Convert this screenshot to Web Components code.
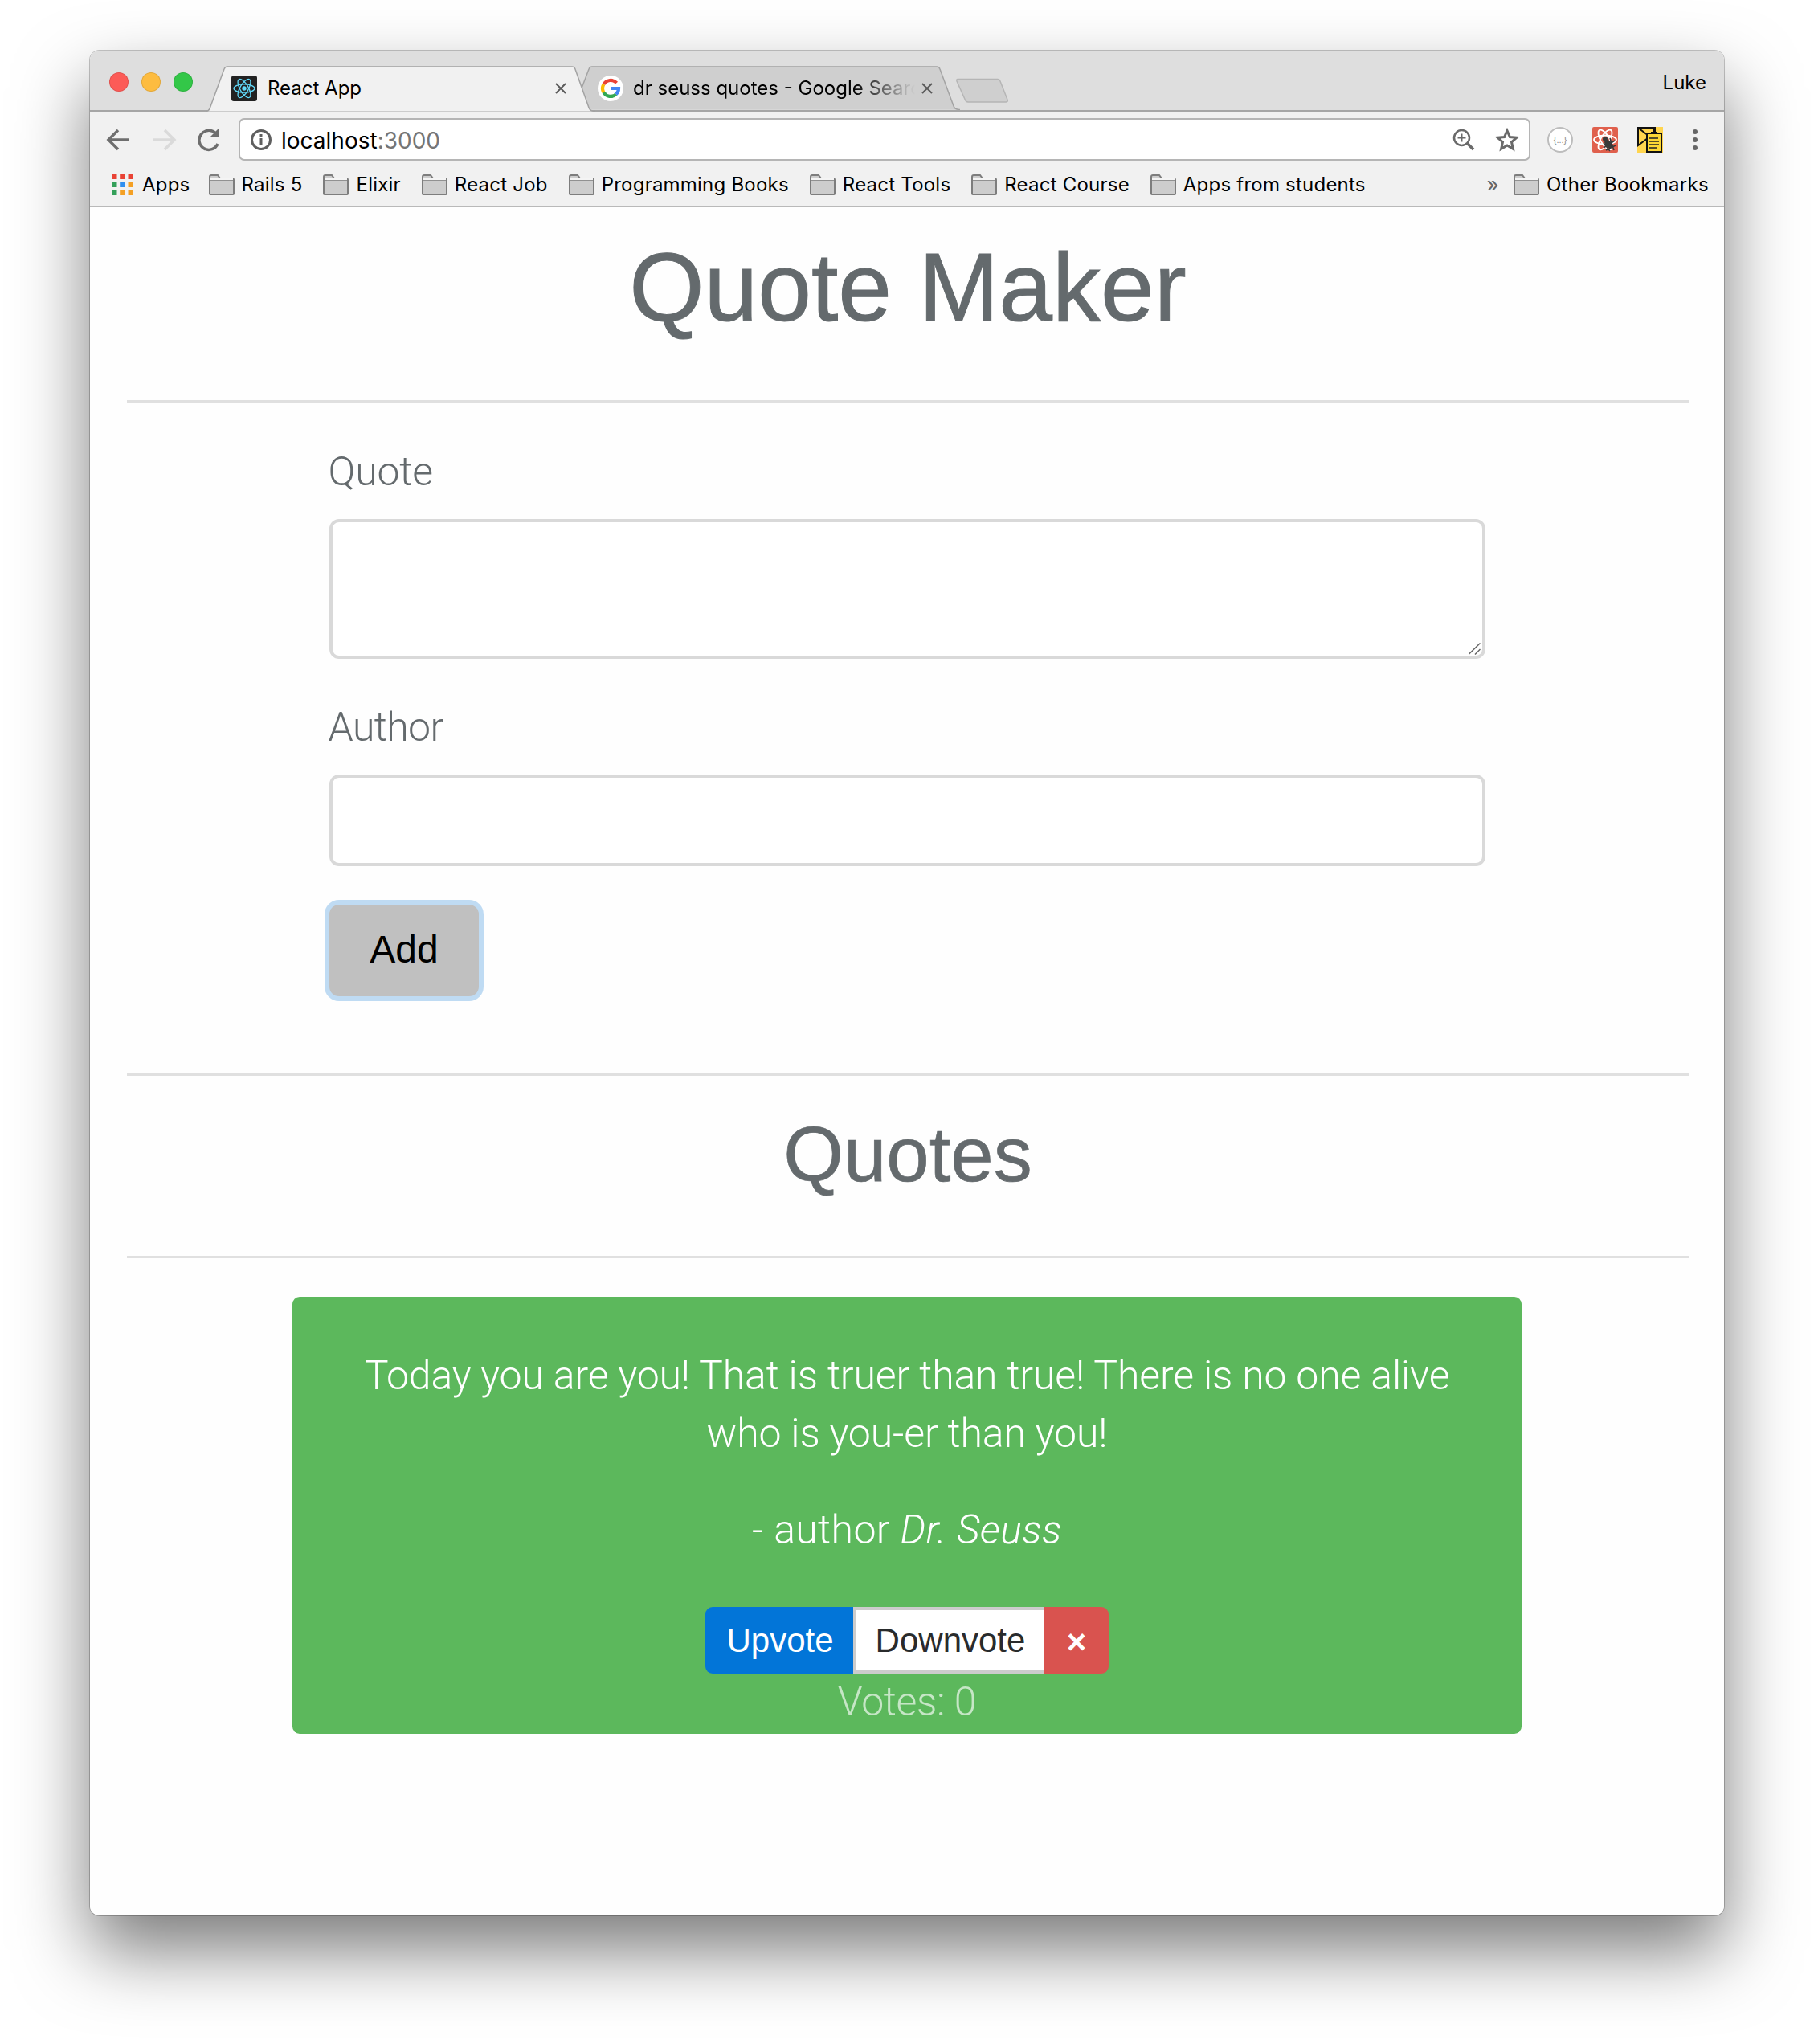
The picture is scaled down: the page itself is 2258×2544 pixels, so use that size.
<!DOCTYPE html>
<html lang="en">
<head>
<meta charset="utf-8">
<title>Quote Maker</title>
<style>
  html, body { margin: 0; background: #fff; }
  body { padding: 63px 112px 0; height: 2481px; overflow: hidden; font-family: "Liberation Sans", Arial, sans-serif; }
</style>
</head>
<body>
<browser-window>
  <tab-strip slot="strip">
    <browser-tab active title-text="React App" icon="react"></browser-tab>
    <browser-tab title-text="dr seuss quotes - Google Search" icon="google"></browser-tab>
  </tab-strip>
  <browser-toolbar slot="toolbar"></browser-toolbar>
  <bookmark-bar slot="bookmarks">
    <bookmark-item>Rails 5</bookmark-item>
    <bookmark-item>Elixir</bookmark-item>
    <bookmark-item>React Job</bookmark-item>
    <bookmark-item>Programming Books</bookmark-item>
    <bookmark-item>React Tools</bookmark-item>
    <bookmark-item>React Course</bookmark-item>
    <bookmark-item>Apps from students</bookmark-item>
    <bookmark-item slot="end">Other Bookmarks</bookmark-item>
  </bookmark-bar>
  <quote-app>
    <quote-card author="Dr. Seuss" votes="0">Today you are you! That is truer than true! There is no one alive who is you-er than you!</quote-card>
  </quote-app>
</browser-window>

<script>
const UI_FONT = '"Inter", "Liberation Sans", sans-serif';

class BrowserWindow extends HTMLElement {
  constructor() {
    super();
    this.attachShadow({ mode: "open" });
    this.shadowRoot.innerHTML = /*html*/ `
      <style>
        :host {
          display: flex;
          flex-direction: column;
          width: 2034px;
          height: 2321px;
          border-radius: 12px;
          background: #fff;
          box-shadow: 0 0 0 1px rgba(0,0,0,.22), 0 44px 90px rgba(0,0,0,.52);
          overflow: hidden;
        }
        .chrome { background: #f1f1f1; border-bottom: 2px solid #b9b9b9; }
        .page { flex: 1; background: #fefefe; }
      </style>
      <div class="chrome">
        <slot name="strip"></slot>
        <slot name="toolbar"></slot>
        <slot name="bookmarks"></slot>
      </div>
      <div class="page"><slot></slot></div>
    `;
  }
}

class TabStrip extends HTMLElement {
  constructor() {
    super();
    this.attachShadow({ mode: "open" });
    this.shadowRoot.innerHTML = /*html*/ `
      <style>
        :host {
          display: flex;
          align-items: flex-end;
          height: 74px;
          padding-left: 24px;
          background: #dedede;
          border-bottom: 2px solid #a6a6a6;
          font-family: ${UI_FONT};
        }
        .lights { display: flex; gap: 16px; align-self: flex-start; margin: 27px 16px 0 0; }
        .lights i { width: 24px; height: 24px; border-radius: 50%; box-sizing: border-box; border: 1px solid rgba(0,0,0,.1); }
        .new-tab { margin: 0 0 9px -5px; width: 65px; height: 31px; }
        .user { margin-left: auto; align-self: flex-start; margin-top: 25px; padding-right: 22px; font-size: 24px; line-height: 30px; color: #000; }
      </style>
      <div class="lights">
        <i style="background:#fc5b57"></i>
        <i style="background:#fdbc40"></i>
        <i style="background:#33c748"></i>
      </div>
      <slot></slot>
      <svg class="new-tab" viewBox="0 0 65 31">
        <path d="M2 1.500H52Q54 1.500 55 4L64 27Q65 30 62 30H15Q12.500 30 11.500 27.500L1 4Q.5 1.500 2 1.500Z" fill="#cfcfcf" stroke="#b5b5b5" stroke-width="1.500"/>
      </svg>
      <span class="user">Luke</span>
    `;
  }
}

const TAB_ICONS = {
  react: /*html*/ `
    <svg width="32" height="32" viewBox="0 0 32 32">
      <rect width="32" height="32" rx="3" fill="#222"/>
      <g fill="none" stroke="#61dafb" stroke-width="1.300">
        <ellipse cx="16" cy="16" rx="13" ry="5.200"/>
        <ellipse cx="16" cy="16" rx="13" ry="5.200" transform="rotate(60 16 16)"/>
        <ellipse cx="16" cy="16" rx="13" ry="5.200" transform="rotate(120 16 16)"/>
      </g>
      <circle cx="16" cy="16" r="2.700" fill="#61dafb"/>
    </svg>`,
  google: /*html*/ `
    <svg width="32" height="32" viewBox="0 0 32 32">
      <circle cx="16" cy="16" r="16" fill="#fff"/>
      <g fill="none" stroke-width="4.200">
        <path d="M23.500 9.200A10 10 0 0 0 7.400 11" stroke="#ea4335"/>
        <path d="M7.400 11A10 10 0 0 0 7.400 21" stroke="#fbbc05"/>
        <path d="M7.400 21A10 10 0 0 0 22.800 23.300" stroke="#34a853"/>
        <path d="M22.800 23.300A10 10 0 0 0 26 16H16" stroke="#4285f4"/>
      </g>
    </svg>`,
};

class BrowserTab extends HTMLElement {
  constructor() {
    super();
    this.attachShadow({ mode: "open" });
  }
  connectedCallback() {
    const active = this.hasAttribute("active");
    const fill = active ? "#f1f1f1" : "#cfcfcf";
    const h = active ? 57 : 55;
    this.shadowRoot.innerHTML = /*html*/ `
      <style>
        :host {
          position: relative;
          display: flex;
          align-items: center;
          box-sizing: border-box;
          width: 485px;
          height: ${h}px;
          padding: 0 0 ${active ? 2 : 0}px ${active ? 32 : 34}px;
          margin-left: ${active ? 0 : -31}px;
          margin-bottom: ${active ? -2 : 0}px;
          z-index: ${active ? 2 : 1};
          font-size: 24px;
          color: #000;
        }
        svg.shape { position: absolute; left: 0; top: 0; }
        .icon { position: relative; width: 32px; height: 32px; flex: none; }
        .label {
          position: relative;
          margin-left: ${active ? 13 : 12}px;
          width: ${active ? 361 : 351}px;
          flex: none;
          white-space: nowrap;
          overflow: hidden;
          line-height: 30px;
          ${active ? "" : "-webkit-mask-image: linear-gradient(90deg, #000 78%, transparent 100%);"}
        }
        .close { position: relative; margin-left: ${active ? -3 : 8}px; width: 14px; height: 14px; flex: none; }
      </style>
      <svg class="shape" width="485" height="${h}" viewBox="0 0 485 ${h}">
        <path d="M0 ${h - .5}Q4 ${h - .5} 5.500 ${h - 5}L23 4Q24 1 27 1H456Q459 1 460 4L477 ${h - 5}Q478.500 ${h - .5} 485 ${h - .5}" fill="${fill}" stroke="#a3a3a3" stroke-width="1.500"/>
      </svg>
      <span class="icon">${TAB_ICONS[this.getAttribute("icon")]}</span>
      <span class="label">${this.getAttribute("title-text")}</span>
      <svg class="close" viewBox="0 0 14 14"><path d="M1 1L13 13M13 1L1 13" stroke="#5a5a5a" stroke-width="2" fill="none"/></svg>
    `;
  }
}

class BrowserToolbar extends HTMLElement {
  constructor() {
    super();
    this.attachShadow({ mode: "open" });
    this.shadowRoot.innerHTML = /*html*/ `
      <style>
        :host {
          display: flex;
          align-items: center;
          height: 53px;
          padding-top: 8px;
          font-family: ${UI_FONT};
        }
        .nav { display: flex; width: 185px; flex: none; box-sizing: border-box; padding-left: 18px; gap: 20px; }
        .nav svg { width: 36px; height: 36px; display: block; }
        .omnibox {
          display: flex;
          align-items: center;
          width: 1608px;
          height: 53px;
          box-sizing: border-box;
          flex: none;
          background: #fff;
          border: 2px solid #b5b5b5;
          border-radius: 7px;
          padding: 0 12px 0 13px;
          font-size: 28px;
          color: #000;
        }
        .omnibox .url { margin-left: 12px; padding-top: 2px; flex: 1; }
        .omnibox .port { color: #757575; }
        .omnibox .right { display: flex; gap: 25px; align-items: center; }
        .exts { display: flex; align-items: center; margin-left: 21px; }
        .exts > * { flex: none; display: block; }
      </style>
      <div class="nav">
        <svg viewBox="0 0 36 36"><path d="M31 18H6M17 6L5 18L17 30" fill="none" stroke="#6e6e6e" stroke-width="3.500"/></svg>
        <svg viewBox="0 0 36 36"><path d="M5 18H30M19 6L31 18L19 30" fill="none" stroke="#dadada" stroke-width="3.500"/></svg>
        <svg viewBox="0 0 36 36"><path d="M29 23A12 12 0 1 1 26 9.500" fill="none" stroke="#6e6e6e" stroke-width="3.500"/><path d="M30 4V15H19Z" fill="#6e6e6e"/></svg>
      </div>
      <div class="omnibox">
        <svg width="26" height="26" viewBox="0 0 26 26" style="flex:none">
          <circle cx="13" cy="13" r="11.500" fill="none" stroke="#5f5f5f" stroke-width="3"/>
          <rect x="11.500" y="6" width="3" height="3" fill="#5f5f5f"/><rect x="11.500" y="11" width="3" height="9" fill="#5f5f5f"/>
        </svg>
        <span class="url">localhost<span class="port">:3000</span></span>
        <span class="right">
          <svg width="28" height="28" viewBox="0 0 28 28">
            <circle cx="11.500" cy="11.500" r="9.500" fill="none" stroke="#6a6a6a" stroke-width="2.500"/>
            <path d="M18 18L26 26" stroke="#6a6a6a" stroke-width="3.500"/>
            <path d="M11.500 6.500V16.500M6.500 11.500H16.500" stroke="#6a6a6a" stroke-width="2"/>
          </svg>
          <svg width="30" height="30" viewBox="0 0 30 30">
            <path d="M15 3.500L18.400 11.500L27 12.200L20.500 17.900L22.400 26.400L15 21.900L7.600 26.400L9.500 17.900L3 12.200L11.600 11.500Z" fill="none" stroke="#6a6a6a" stroke-width="3" stroke-linejoin="miter"/>
          </svg>
        </span>
      </div>
      <div class="exts">
        <svg width="32" height="32" viewBox="0 0 32 32">
          <circle cx="16" cy="16" r="15" fill="#fff" stroke="#bdbdbd" stroke-width="2"/>
          <text x="16" y="20" text-anchor="middle" font-size="11" font-family="Liberation Sans" fill="#8a8a8a">{...}</text>
        </svg>
        <svg width="32" height="32" viewBox="0 0 32 32" style="margin-left:24px">
          <rect width="32" height="32" rx="2" fill="#e0604d"/>
          <g fill="none" stroke="#fff" stroke-width="1.800">
            <ellipse cx="16" cy="16" rx="14" ry="5.500"/>
            <ellipse cx="16" cy="16" rx="14" ry="5.500" transform="rotate(60 16 16)"/>
            <ellipse cx="16" cy="16" rx="14" ry="5.500" transform="rotate(120 16 16)"/>
          </g>
          <ellipse cx="20" cy="21" rx="4" ry="6" fill="#3a3a3a" transform="rotate(-40 20 21)"/>
          <circle cx="16" cy="15" r="3" fill="#3a3a3a"/>
          <path d="M14 26L28 17M17 29L29 23M22 14L27 29M14 20L22 30" stroke="#3a3a3a" stroke-width="1.600"/>
        </svg>
        <svg width="32" height="32" viewBox="0 0 32 32" style="margin-left:24px">
          <rect width="32" height="32" fill="#ffd54f"/>
          <path d="M1 1H22V6L13 14L1 23Z" fill="#ffd54f" stroke="#111" stroke-width="2"/>
          <path d="M1 1L14 11" stroke="#111" stroke-width="2"/>
          <rect x="12" y="8" width="18" height="23" fill="#fdd835" stroke="#111" stroke-width="2"/>
          <path d="M17 9V6H19V3H23V6H25V9Z" fill="#111"/>
          <path d="M15 14H26M15 18H27M15 22H27M15 26H24" stroke="#222" stroke-width="1.500"/>
        </svg>
        <svg width="8" height="28" viewBox="0 0 8 28" style="margin-left:36px">
          <circle cx="4" cy="4" r="3" fill="#666"/><circle cx="4" cy="14" r="3" fill="#666"/><circle cx="4" cy="24" r="3" fill="#666"/>
        </svg>
      </div>
    `;
  }
}

class BookmarkBar extends HTMLElement {
  constructor() {
    super();
    this.attachShadow({ mode: "open" });
    this.shadowRoot.innerHTML = /*html*/ `
      <style>
        :host {
          display: flex;
          align-items: center;
          height: 53px;
          margin-top: 3px;
          padding: 0 19px 0 27px;
          gap: 26px;
          font-family: ${UI_FONT};
          font-size: 24px;
          letter-spacing: .22px;
          color: #000;
        }
        .apps { display: flex; align-items: center; gap: 11px; margin-right: -3px; }
        .apps svg { display: block; }
        .more { margin-left: auto; color: #666; font-size: 26px; }
        .end { display: flex; margin-left: -8px; letter-spacing: .3px; }
      </style>
      <span class="apps">
        <svg width="27" height="26" viewBox="0 0 27 26">
          <path d="M0 0h6.500v6H0zM10.200 0h6.500v6h-6.500zM20.500 0h6.500v6h-6.500z" fill="#e94335"/>
          <path d="M0 10h6.500v6H0zM0 20h6.500v6H0z" fill="#34a05a"/>
          <path d="M10.200 10h6.500v6h-6.500z" fill="#2f8ff0"/>
          <path d="M20.500 10h6.500v6h-6.500zM10.200 20h6.500v6h-6.500zM20.500 20h6.500v6h-6.500z" fill="#f4a024"/>
        </svg>
        <span>Apps</span>
      </span>
      <slot></slot>
      <span class="more">»</span>
      <span class="end"><slot name="end"></slot></span>
    `;
  }
}

class BookmarkItem extends HTMLElement {
  constructor() {
    super();
    this.attachShadow({ mode: "open" });
    this.shadowRoot.innerHTML = /*html*/ `
      <style>
        :host { display: flex; align-items: center; gap: 9px; white-space: nowrap; }
        svg { display: block; flex: none; }
      </style>
      <svg width="32" height="26" viewBox="0 0 32 26">
        <path d="M1 24V3Q1 1 3 1H11L14 5H29Q31 5 31 7V24Q31 25 30 25H2Q1 25 1 24Z" fill="#cdcdcd" stroke="#7d7d7d" stroke-width="2"/>
        <path d="M1 7H31" stroke="#7d7d7d" stroke-width="1.500"/>
        <path d="M2 5H30V7H2Z" fill="#f4f4f4"/>
      </svg>
      <slot></slot>
    `;
  }
}

class QuoteApp extends HTMLElement {
  constructor() {
    super();
    this.attachShadow({ mode: "open" });
    this.shadowRoot.innerHTML = /*html*/ `
      <style>
        :host {
          display: block;
          padding: 33px 44px 0 46px;
          color: #646a6d;
          text-align: center;
        }
        h1, h2 { margin: 0; font-weight: 400; font-family: "Liberation Sans", sans-serif; }
        h1 { font-size: 120px; line-height: 132px; -webkit-text-stroke: 1px #646a6d; }
        h2 { font-size: 96px; line-height: 106px; -webkit-text-stroke: .7px #646a6d; }
        hr { border: 0; height: 3px; background: #e0e0e0; margin: 0; }
        form { display: flex; flex-direction: column; align-items: flex-start; margin: 48px 253px 0 252px; text-align: left; }
        label { font: 300 50px/72px Roboto, "Liberation Sans", sans-serif; letter-spacing: -.2px; padding-top: 2px; margin: 0 0 23px -1.500px; }
        label[for="a"] { letter-spacing: -.6px; }
        .field { position: relative; width: 100%; margin-bottom: 47px; }
        .field svg { position: absolute; right: 6px; bottom: 5px; }
        textarea, input {
          display: block;
          width: 100%;
          box-sizing: border-box;
          border: 4px solid #d9d9d9;
          border-radius: 12px;
          background: #fff;
          outline: none;
          margin: 0;
        }
        textarea { height: 174px; resize: none; }
        input { height: 114px; margin-bottom: 48px; }
        .add {
          width: 186px;
          height: 114px;
          border: 0;
          border-radius: 12px;
          background: #c0c0c0;
          box-shadow: 0 0 0 6px #bfdbf3;
          font: 48px "Liberation Sans", sans-serif;
          color: #000;
          padding: 0 0 3px;
        }
        .list { display: flex; justify-content: center; margin-top: 48px; padding-right: 2px; }
      </style>
      <h1>Quote Maker</h1>
      <hr style="margin-top:75px">
      <form>
        <label for="q">Quote</label>
        <div class="field">
          <textarea id="q"></textarea>
          <svg width="15" height="15" viewBox="0 0 15 15"><path d="M0 14.500L14.500 .5M8 14.500L14.500 8" stroke="#666" stroke-width="1.500" fill="none"/></svg>
        </div>
        <label for="a">Author</label>
        <input id="a" type="text">
        <button class="add" type="button">Add</button>
      </form>
      <hr style="margin-top:96px">
      <h2 style="margin-top:45px">Quotes</h2>
      <hr style="margin-top:73px">
      <div class="list"><slot></slot></div>
    `;
  }
}

class QuoteCard extends HTMLElement {
  constructor() {
    super();
    this.attachShadow({ mode: "open" });
  }
  connectedCallback() {
    this.shadowRoot.innerHTML = /*html*/ `
      <style>
        :host {
          display: block;
          box-sizing: border-box;
          width: 1530px;
          height: 544px;
          padding: 62px 60px 0;
          background: #5cb85c;
          border-radius: 9px;
          color: #fff;
          text-align: center;
          font: 300 50px/72px Roboto, "Liberation Sans", sans-serif;
        }
        p { margin: 0; letter-spacing: -.16px; }
        p.text { margin: 0 20px 48px; }
        p.by { letter-spacing: .35px; }
        em { font-style: italic; }
        .actions { display: flex; justify-content: center; height: 83px; margin-top: 60px; }
        button {
          height: 83px;
          border: 0;
          padding: 0;
          font: 42px "Liberation Sans", sans-serif;
        }
        .up { width: 184px; background: #0275d8; color: #fff; border-radius: 9px 0 0 9px; padding-left: 2px; }
        .down { width: 238px; background: #fff; color: #292b2c; border: 4px solid #ccc; border-right: 0; }
        .del { width: 80px; background: #d9534f; color: #fff; border-radius: 0 9px 9px 0; font-weight: 700; padding-top: 4px; }
        .votes { line-height: 70px; letter-spacing: -.4px; color: rgba(255,255,255,.65); }
      </style>
      <p class="text"><slot></slot></p>
      <p class="by">- author <em>${this.getAttribute("author")}</em></p>
      <div class="actions">
        <button class="up" type="button">Upvote</button>
        <button class="down" type="button">Downvote</button>
        <button class="del" type="button">×</button>
      </div>
      <div class="votes">Votes: ${this.getAttribute("votes")}</div>
    `;
  }
}

customElements.define("browser-window", BrowserWindow);
customElements.define("tab-strip", TabStrip);
customElements.define("browser-tab", BrowserTab);
customElements.define("browser-toolbar", BrowserToolbar);
customElements.define("bookmark-bar", BookmarkBar);
customElements.define("bookmark-item", BookmarkItem);
customElements.define("quote-app", QuoteApp);
customElements.define("quote-card", QuoteCard);
</script>
</body>
</html>
